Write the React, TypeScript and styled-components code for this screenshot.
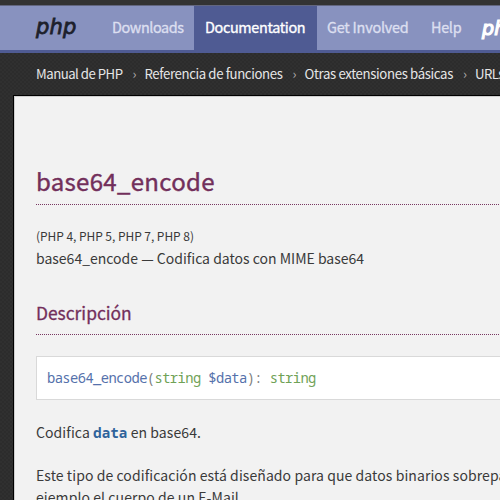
import React from "react";
import styled, { createGlobalStyle } from "styled-components";

const sans = `"Noto Sans CJK SC", "Open Sans", sans-serif`;
const mono = `"Noto Sans Mono", "DejaVu Sans Mono", monospace`;

const GlobalStyle = createGlobalStyle`
  * { box-sizing: border-box; }
  body {
    margin: 0;
    background: #2d2d2d;
    color: #3a3a3a;
    font-family: ${sans};
    overflow: hidden;
  }
`;

const Page = styled.div`
  width: 100vw;
  height: 100vh;
  overflow: hidden;
  display: flex;
  flex-direction: column;
  border-top: 5px solid #333;
  background: repeating-conic-gradient(#2c2c2c 0 25%, #303030 0 50%) 0 0 / 4px 4px;
`;

const Header = styled.nav`
  flex: none;
  height: 48px;
  display: flex;
  white-space: nowrap;
  background: #8892bf;
  border-top: 1px solid #62667f;
  border-bottom: 3px solid #4f5b93;
`;

const Logo = styled.a<{ $light?: boolean }>`
  flex: none;
  width: 60px;
  font: italic ${(p) => (p.$light ? "19px/45px" : "21px/42px")} "DejaVu Sans", sans-serif;
  letter-spacing: 0.2px;
  color: ${(p) => (p.$light ? "#fff" : "#1d1f2b")};
  -webkit-text-stroke: ${(p) => (p.$light ? 1.2 : 0.8)}px currentColor;
`;

const Brand = styled.div`
  flex: none;
  width: 102px;
  padding-left: 36px;
  display: flex;
`;

const NavItem = styled.a<{ $width: number; $spacing: number; $active?: boolean }>`
  flex: none;
  width: ${(p) => p.$width}px;
  height: ${(p) => (p.$active ? 47 : 44)}px;
  padding-left: ${(p) => (p.$active ? 11 : 10)}px;
  font-size: 14.4px;
  line-height: 42px;
  letter-spacing: ${(p) => p.$spacing}px;
  color: ${(p) => (p.$active ? "#fff" : "#dcdff0")};
  background: ${(p) => (p.$active ? "#4f5b93" : "transparent")};
  -webkit-text-stroke: 0.35px currentColor;
`;

const Breadcrumbs = styled.ul`
  flex: none;
  height: 42px;
  margin: 0;
  padding: 0 0 0 36px;
  display: flex;
  list-style: none;
  white-space: nowrap;
`;

const Crumb = styled.li<{ $width: number; $spacing: number }>`
  flex: none;
  width: ${(p) => p.$width}px;
  display: flex;
  justify-content: space-between;
  font-size: 13.2px;
  line-height: 41px;
  letter-spacing: ${(p) => p.$spacing}px;
  color: #e6e6e6;
`;

const Chevron = styled.span`
  width: 12px;
  color: #aaa;
`;

const Content = styled.main`
  flex: 1;
  min-height: 0;
  width: 520px;
  margin-left: 13px;
  padding-left: 22px;
  border: solid #000;
  border-width: 1px 0 0 1px;
  box-shadow: inset 1px 1px 0 #cfcfcf;
  background: #f2f2f2;
`;

const Title = styled.h1`
  margin: 0;
  padding-top: 64px;
  height: 109px;
  border-bottom: 1px dotted #793862;
  font-size: 24px;
  font-weight: 400;
  line-height: 42px;
  letter-spacing: 0.3px;
  color: #722f5b;
  -webkit-text-stroke: 0.4px currentColor;
`;

const Version = styled.p`
  margin: 20px 0 0;
  font-size: 12px;
  line-height: 22px;
  letter-spacing: -0.05px;
`;

const Purpose = styled.p`
  margin: 0;
  font-size: 14px;
  line-height: 22px;
`;

const Subtitle = styled.h3`
  margin: 30px 0 21px;
  height: 36px;
  border-bottom: 1px dotted #793862;
  font-size: 17.4px;
  font-weight: 400;
  line-height: 27px;
  color: #722f5b;
  -webkit-text-stroke: 0.3px currentColor;
`;

const Synopsis = styled.div`
  height: 44px;
  padding-left: 10px;
  border: 1px solid #d9d9d9;
  background: #fff;
  font: 13.8px/41px ${mono};
  letter-spacing: -0.6px;
  white-space: pre;
  color: #808080;
`;

const Name = styled.span`
  color: #5571ab;
`;

const Type = styled.span`
  color: #6fa256;
`;

const Paragraph = styled.p`
  margin: 21px 0 0;
  font-size: 14px;
  line-height: 22px;
  letter-spacing: 0.08px;
  white-space: nowrap;

  &:first-of-type {
    margin-top: 20px;
  }
`;

const Param = styled.code`
  font: 700 14.2px/1 ${mono};
  color: #2f639b;
`;

export default function App() {
  return (
    <>
      <GlobalStyle />
      <Page>
        <Header>
          <Brand>
            <Logo>php</Logo>
          </Brand>
          <NavItem $width={92} $spacing={-0.4}>Downloads</NavItem>
          <NavItem $width={123} $spacing={-0.34} $active>Documentation</NavItem>
          <NavItem $width={104} $spacing={-0.2}>Get Involved</NavItem>
          <NavItem $width={61} $spacing={-0.3}>Help</NavItem>
          <Logo $light>php</Logo>
        </Header>
        <Breadcrumbs>
          <Crumb $width={108.5} $spacing={-0.5}>Manual de PHP <Chevron>›</Chevron></Crumb>
          <Crumb $width={160} $spacing={-0.38}>Referencia de funciones <Chevron>›</Chevron></Crumb>
          <Crumb $width={170.5} $spacing={-0.35}>Otras extensiones básicas <Chevron>›</Chevron></Crumb>
          <Crumb $width={120} $spacing={-0.6}>URLs</Crumb>
        </Breadcrumbs>
        <Content>
          <Title>base64_encode</Title>
          <Version>(PHP 4, PHP 5, PHP 7, PHP 8)</Version>
          <Purpose>base64_encode — Codifica datos con MIME base64</Purpose>
          <Subtitle>Descripción</Subtitle>
          <Synopsis>
            <Name>base64_encode</Name>(<Type>string</Type> <Name>$data</Name>): <Type>string</Type>
          </Synopsis>
          <Paragraph>
            Codifica <Param>data</Param> en base64.
          </Paragraph>
          <Paragraph>
            Este tipo de codificación está diseñado para que datos binarios sobrepasen
            <br />
            ejemplo el cuerpo de un E-Mail.
          </Paragraph>
        </Content>
      </Page>
    </>
  );
}
